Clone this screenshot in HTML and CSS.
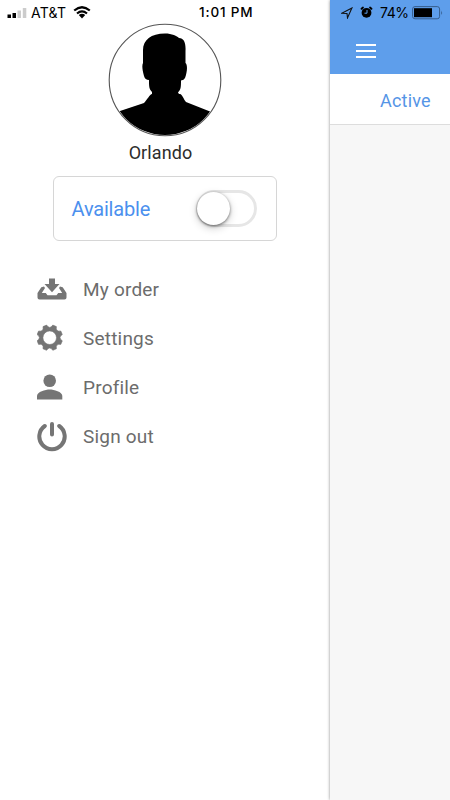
FILE: index.html
```html
<!DOCTYPE html>
<html lang="en">
<head>
<meta charset="utf-8">
<title>Orlando</title>
<link rel="stylesheet" href="styles.css">
</head>
<body>
<div class="app">
  <header class="status">
    <svg class="signal" width="21" height="12" viewBox="0 0 21 12"><path d="M.5 7.500h3.500V11H.5zM5.500 6H9v5H5.500z"/><path fill="#ccc" d="M10.500 3.500H14V11h-3.500zM15.800 1h3.500v10h-3.500z"/></svg>
    <span class="carrier">AT&amp;T</span>
    <svg class="wifi" width="18" height="13" viewBox="0 0 18 13"><path fill="none" stroke="#000" stroke-width="2.200" d="M1.200 4.500Q9-2 16.800 4.500M4 7.500Q9 3.300 14 7.500"/><path d="M5.800 9.100Q9 6.600 12.200 9.100L9 12.400z"/></svg>
    <span class="time">1:01 PM</span>
    <svg class="location" width="12" height="12" viewBox="0 0 12 12"><path fill="none" stroke="#111" stroke-width="1.100" d="M.8 6.200 10.900 1 6.500 10.900 6 6.500z"/></svg>
    <svg class="alarm" width="13" height="13" viewBox="0 0 13 13"><circle cx="6.500" cy="6.800" r="4.900"/><path stroke="#000" stroke-width="1.800" stroke-linecap="round" d="m1.500 2.800 1.500-1.300m8.500 1.300L10 1.500"/><path fill="none" stroke="#5e9eeb" stroke-width="1" d="M7 4v3.200H4.500"/></svg>
    <span class="percent">74%</span>
    <svg class="battery" width="32" height="14" viewBox="0 0 32 14"><rect x=".6" y=".6" width="27" height="12.200" rx="2.400" fill="none" stroke="#365d8d"/><rect x="2" y="2.200" width="18" height="9"/><path fill="#365d8d" d="M29.200 4.500q1.800 2.300 0 4.600z"/></svg>
  </header>
  <aside class="drawer">
    <svg class="avatar" width="114" height="114" viewBox="0 0 114 114">
      <defs><clipPath id="c"><circle cx="57" cy="57" r="55"/></clipPath></defs>
      <path clip-path="url(#c)" d="M35 40V27C35 17 43 10.500 57 10.500c7 0 12 2.500 14 4.500 5 0 7 5 6.500 13v12c2.500 2 1.500 10-.5 15q-1 2-4 2.500c0 6 0 9-3 12l1 1.500h1c2 0 4 6 6 8l24 9.500V114H9V89l27-9c3-3 6-9 8-9v-2c-3-3-3-6-3-12q-4 0-5-4c-2-7-2-11-1-13z"/>
      <circle cx="57" cy="57" r="55.800" fill="none" stroke="#555" stroke-width="1.100"/>
    </svg>
    <h1 class="name">Orlando</h1>
    <div class="available"><span>Available</span><div class="toggle"><i></i></div></div>
    <nav class="menu">
      <a><svg width="30" height="30" viewBox="0 0 30 30"><path d="M12 3.500h6V9h4.500L15 17.300 7.500 9H12z"/><path d="M7 11.500 4.300 12.300.5 18v4.500q0 2 2 2h25q2 0 2-2V18l-3.800-5.700-2.700-.8-1 1.500 3.200 5h-4l-1.700 2.300h-9L8.800 18h-4L8 13z"/></svg><span>My order</span></a>
      <a><svg width="30" height="30" viewBox="-12.700 -13.700 30 30"><path fill-rule="evenodd" stroke="#757575" stroke-width=".6" stroke-linejoin="round" d="M12.600 3.100 11.100 6.700Q5.700 5.700 6.700 11.100L3.100 12.600Q0 8-3.100 12.600L-6.700 11.100Q-5.700 5.700-11.100 6.700L-12.600 3.100Q-8 0-12.600-3.100L-11.100-6.700Q-5.700-5.700-6.700-11.100L-3.100-12.600Q0-8 3.100-12.600L6.700-11.100Q5.700-5.700 11.100-6.700L12.600-3.100Q8 0 12.600 3.100zM6.800 0A6.800 6.800 0 1 0-6.800 0 6.800 6.800 0 1 0 6.800 0z"/></svg><span>Settings</span></a>
      <a><svg width="30" height="30" viewBox="0 0 30 30"><circle cx="12.700" cy="7.800" r="6.300"/><path d="M0 26.500V23c0-4.300 8.500-6.500 12.700-6.500S25.300 18.700 25.300 23v3.500z"/></svg><span>Profile</span></a>
      <a><svg width="30" height="30" viewBox="0 0 30 30"><path fill="none" stroke="#757575" stroke-width="4" stroke-linecap="round" d="M7.800 4a12.700 12.700 0 1 0 14.400 0M15 2v10.500"/></svg><span>Sign out</span></a>
    </nav>
  </aside>
  <main class="page">
    <div class="toolbar"><svg width="20" height="16" viewBox="0 0 20 16"><path stroke="#fff" stroke-width="2" d="M0 2h20M0 8h20M0 14h20"/></svg></div>
    <div class="tab">Active</div>
  </main>
</div>
</body>
</html>
```
FILE: styles.css
```css
* { box-sizing: border-box; }
body { margin: 0; font-family: Roboto, sans-serif; }
svg { display: block; flex: none; }
.app { position: relative; display: grid; grid-template-columns: 330px 120px; width: 450px; height: 800px; overflow: hidden; background: #fff; }
.status { position: absolute; z-index: 3; top: 0; left: 0; width: 450px; height: 25px; display: flex; align-items: center; padding-left: 7px; font: 14px/25px Inter, sans-serif; color: #000; white-space: nowrap; }
.carrier { width: 36px; margin-left: 3px; font-size: 14px; letter-spacing: .25px; }
.wifi { margin-left: 6px; }
.time { width: 56px; margin-left: 108px; font-size: 13.5px; font-weight: 500; letter-spacing: .85px; }
.location { margin-left: 86px; }
.alarm { margin-left: 7px; }
.percent { width: 30px; margin-left: 7px; letter-spacing: -.4px; }
.battery { margin-left: 2px; }
.drawer { display: flex; flex-direction: column; align-items: center; padding-top: 23px; background: #fff; }
.name { margin: 4px 0 0; padding-right: 9px; font-size: 18px; font-weight: 400; line-height: 24px; letter-spacing: .1px; color: #2c2c2c; }
.available { width: 224px; height: 65px; margin-top: 11px; padding: 0 19px 0 17.500px; display: flex; align-items: center; justify-content: space-between; border: 1px solid #d6d6d6; border-radius: 6px; color: #4b90ee; font-size: 20px; letter-spacing: -.18px; }
.toggle { width: 61px; height: 37px; border: 3px solid #e6e6e6; border-radius: 19px; }
.toggle i { display: block; width: 33px; height: 33px; margin: -1px 0 0 -2px; border-radius: 50%; background: #fff; box-shadow: 0 1px 3px rgba(0,0,0,.5), 0 3px 8px rgba(0,0,0,.2); }
.menu { align-self: stretch; margin-top: 24px; padding-left: 37px; }
.menu a { display: flex; align-items: center; gap: 16px; height: 49px; font-size: 19px; letter-spacing: .2px; color: #6c6c6c; }
.menu svg { fill: #757575; }
.page { position: relative; z-index: 1; background: #f7f7f7; box-shadow: 0 0 3px rgba(0,0,0,.45); }
.toolbar { height: 74px; padding: 43px 0 0 26px; background: #5e9eeb; }
.tab { height: 51px; padding-left: 50px; border-bottom: 1px solid #ddd; background: #fff; color: #5595e6; font-size: 18px; line-height: 53px; letter-spacing: .2px; }
```
